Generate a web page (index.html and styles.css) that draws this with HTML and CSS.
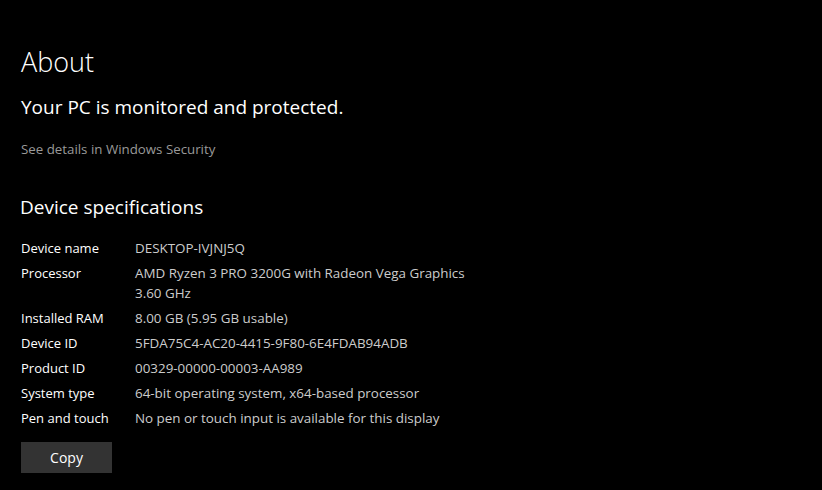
FILE: index.html
```html
<!DOCTYPE html>
<html lang="en">
<head>
<meta charset="utf-8">
<title>About</title>
<link rel="stylesheet" href="styles.css">
</head>
<body>
<main class="page">
  <h1 class="title">About</h1>
  <h2 class="status">Your PC is monitored and protected.</h2>
  <a class="link" href="#">See details in Windows Security</a>

  <h2 class="section">Device specifications</h2>
  <dl class="specs">
    <div class="row"><dt>Device name</dt><dd>DESKTOP-IVJNJ5Q</dd></div>
    <div class="row"><dt>Processor</dt><dd>AMD Ryzen 3 PRO 3200G with Radeon Vega Graphics<br>3.60 GHz</dd></div>
    <div class="row"><dt>Installed RAM</dt><dd>8.00 GB (5.95 GB usable)</dd></div>
    <div class="row"><dt>Device ID</dt><dd>5FDA75C4-AC20-4415-9F80-6E4FDAB94ADB</dd></div>
    <div class="row"><dt>Product ID</dt><dd>00329-00000-00003-AA989</dd></div>
    <div class="row"><dt>System type</dt><dd>64-bit operating system, x64-based processor</dd></div>
    <div class="row"><dt>Pen and touch</dt><dd>No pen or touch input is available for this display</dd></div>
  </dl>
  <button class="copy" type="button">Copy</button>
</main>
</body>
</html>
```
FILE: styles.css
```css
html, body {
  margin: 0;
  background: #000;
  color: #fff;
  font-family: "Open Sans", "Noto Sans", sans-serif;
}
.page {
  padding: 42px 0 0 21px;
  display: flex;
  flex-direction: column;
  align-items: flex-start;
}
.title {
  margin: 0;
  font-size: 27px;
  font-weight: 300;
  line-height: 40px;
}
.status {
  margin: 11px 0 0;
  font-size: 19px;
  font-weight: 400;
  line-height: 28px;
}
.link {
  margin-top: 18px;
  font-size: 13.3px;
  line-height: 20px;
  color: #999;
  text-decoration: none;
}
.section {
  margin: 34px 0 0 -1px;
  font-size: 19px;
  font-weight: 400;
  line-height: 28px;
}
.specs {
  margin: 17px 0 0;
  display: flex;
  flex-direction: column;
  gap: 5px;
  font-size: 13px;
  line-height: 20px;
}
.row {
  display: grid;
  grid-template-columns: 114px auto;
}
.row dt {
  color: #fff;
}
.row dd {
  margin: 0;
  color: #ccc;
  font-size: 13.4px;
}
.copy {
  margin-top: 14px;
  width: 91px;
  height: 31px;
  border: 0;
  background: #333;
  color: #fff;
  font-family: inherit;
  font-size: 14px;
}
```
